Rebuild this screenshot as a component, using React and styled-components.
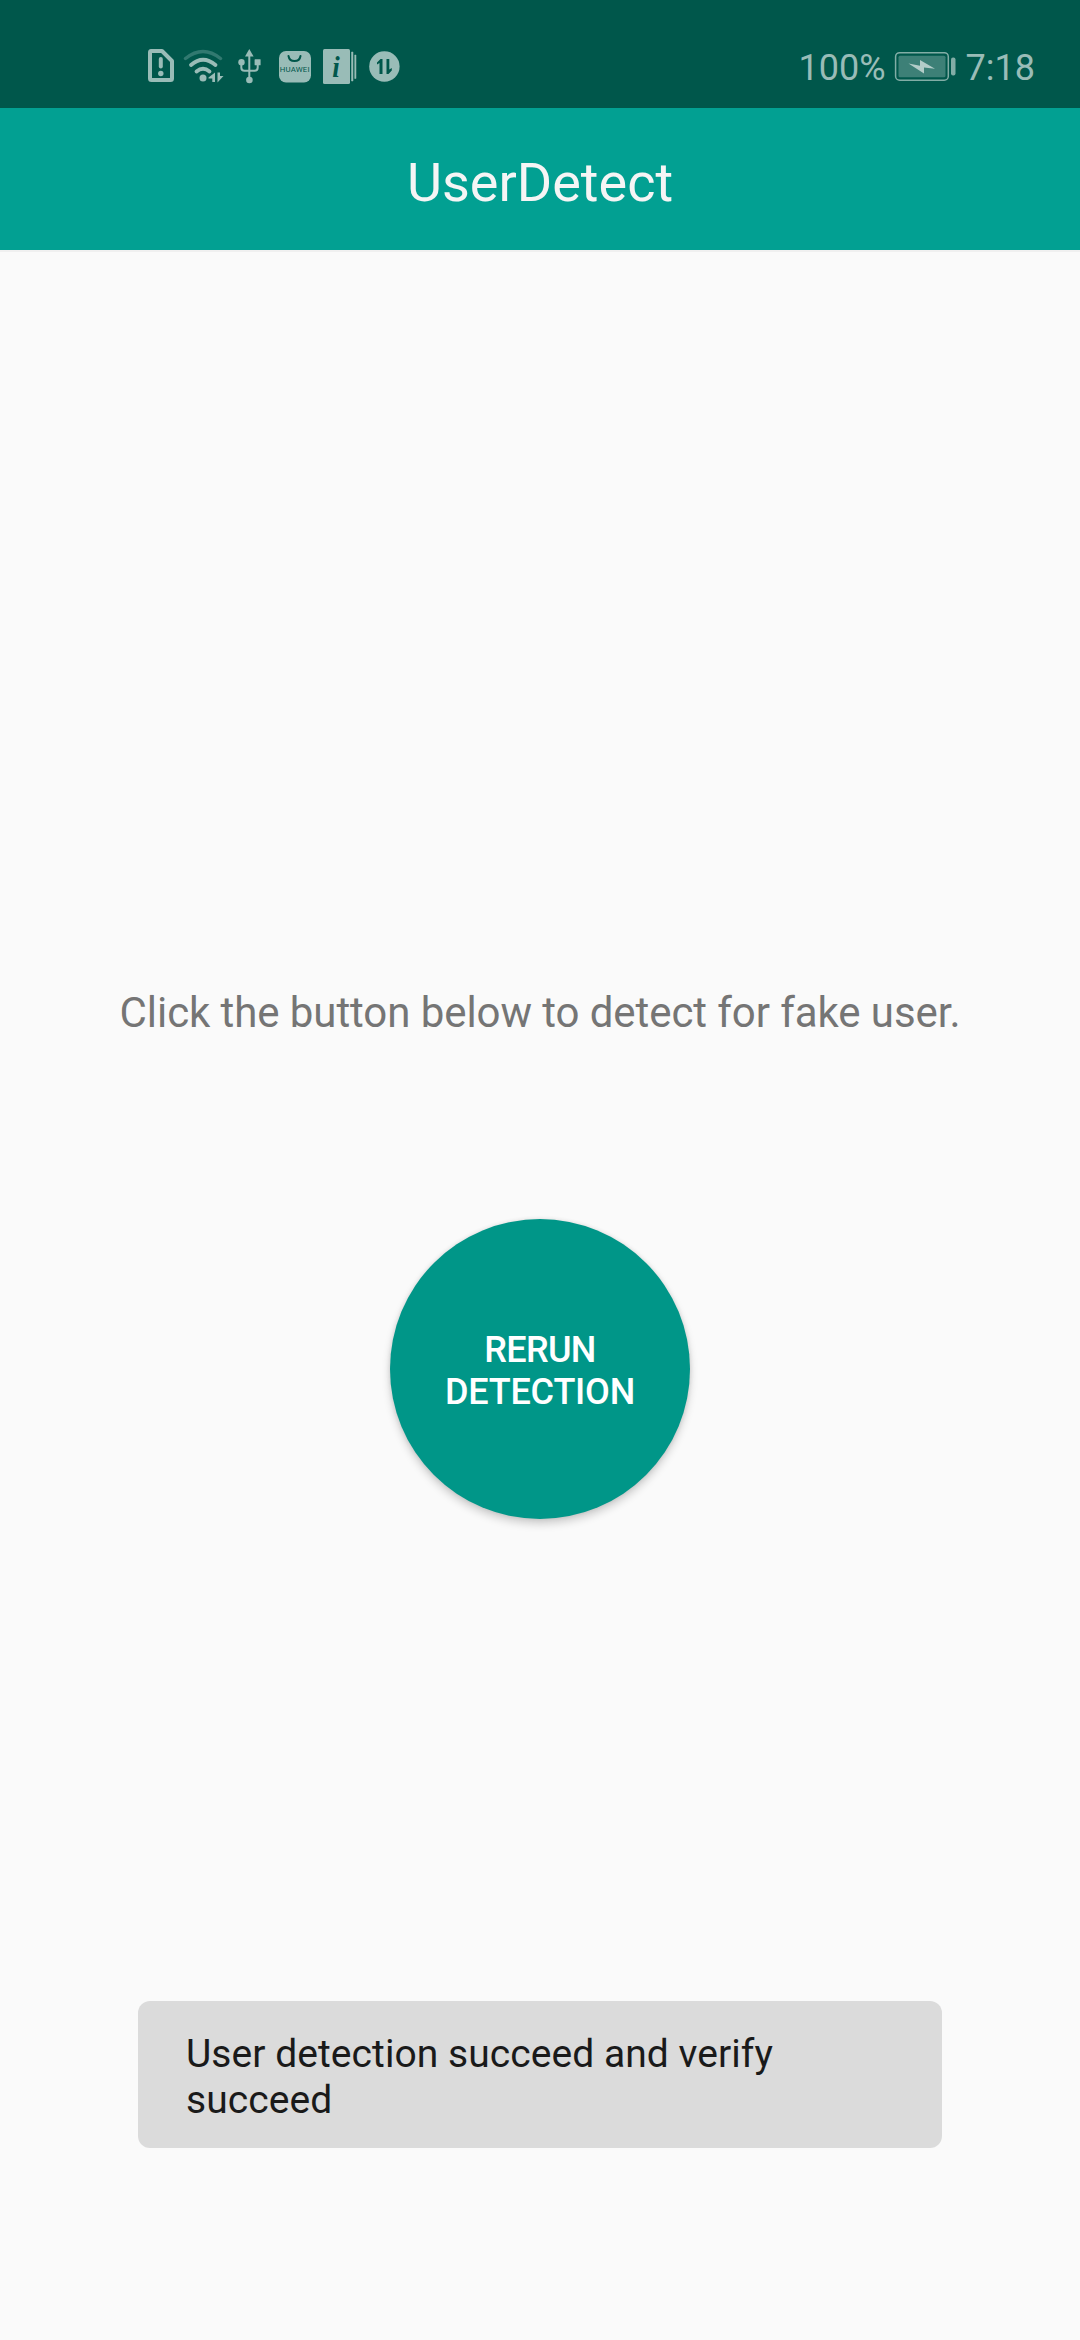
import React from 'react';
import styled, { createGlobalStyle } from 'styled-components';

const GlobalStyle = createGlobalStyle`
  * { box-sizing: border-box; }
  body { margin: 0; background: #fafafa; }
`;

const Screen = styled.div`
  width: 1080px;
  height: 2340px;
  display: flex;
  flex-direction: column;
  background: #fafafa;
  font-family: Roboto, 'Liberation Sans', sans-serif;
  overflow: hidden;
`;

const StatusBar = styled.header`
  height: 108px;
  flex: none;
  display: flex;
  justify-content: space-between;
  align-items: flex-start;
  padding: 45px 45px 0 144px;
  background: #00574b;
  color: #99bcb7;
`;

const StatusIcons = styled.div`
  display: flex;
  height: 42px;
`;

const StatusInfo = styled.div`
  display: flex;
  height: 42px;
  align-items: flex-start;
  font-size: 36px;
  line-height: 46px;
  white-space: nowrap;
`;

const Battery = styled.svg`
  display: block;
  flex: none;
  margin: 0 9px 0 7px;
`;

const AppBar = styled.div`
  height: 144px;
  flex: none;
  display: flex;
  align-items: center;
  justify-content: center;
  padding-top: 7px;
  background: #02a092;
  border-bottom: 2px solid #f0f0f0;
`;

const Title = styled.h1`
  margin: 0;
  font-size: 54px;
  line-height: 63px;
  font-weight: 400;
  color: #f5f5f5;
`;

const Content = styled.main`
  flex: 1;
  display: flex;
  flex-direction: column;
  align-items: center;
  padding-top: 736px;
`;

const Prompt = styled.p`
  margin: 0;
  font-size: 42px;
  line-height: 50px;
  letter-spacing: -0.075px;
  color: #757575;
  white-space: nowrap;
`;

const DetectButton = styled.button`
  width: 300px;
  height: 300px;
  flex: none;
  display: flex;
  flex-direction: column;
  align-items: center;
  justify-content: center;
  margin: 181px 0 0;
  padding: 4px 40px 0;
  border: 0;
  border-radius: 50%;
  background: #009688;
  box-shadow: 0 5px 8px rgba(0, 0, 0, 0.18), 0 0 4px rgba(0, 0, 0, 0.1);
  color: #fff;
  font-family: inherit;
  font-size: 36px;
  line-height: 42px;
  font-weight: 500;
  text-transform: uppercase;
`;

const ButtonLine = styled.span`
  letter-spacing: ${(p) => p.$tracking}px;
`;

const Toast = styled.div`
  width: 804px;
  height: 147px;
  flex: none;
  margin-top: 482px;
  padding: 30px 48px;
  border-radius: 12px;
  background: #dbdbdb;
  color: #1a1a1a;
  font-size: 39px;
  line-height: 46px;
  letter-spacing: 0.055px;
`;

function StatusGlyphs() {
  return (
    <svg width="260" height="42" viewBox="144 45 260 42" fill="none" stroke="#99bcb7">
      <path d="M151 51H162L172 61V78.500Q172 80 170.500 80H151.500Q150 80 150 78.500V52.500Q150 51 151 51Z" strokeWidth="4" strokeLinejoin="round" />
      <path d="M160.800 59V66.500" strokeWidth="4" strokeLinecap="round" />
      <circle cx="160.800" cy="73.500" r="2.700" fill="#99bcb7" stroke="none" />
      <path d="M185.500 58.500Q203 44.500 220.500 58.500" stroke="#317970" strokeWidth="3.500" strokeLinecap="round" />
      <path d="M191 65Q203 54.500 215.500 65M196.500 71.500Q203 66 209.500 71.500" strokeWidth="3.800" strokeLinecap="round" />
      <circle cx="203" cy="78" r="3.500" fill="#99bcb7" stroke="none" />
      <path d="M208.500 77.500L215 72.500V82H212.300V78.500H208.500ZM217.500 72.500H220V76H223.500L217.500 82.500Z" fill="#99bcb7" stroke="none" />
      <path d="M249.300 54V79M241.300 63V67.500Q241.300 70.800 244.500 70.800H254.500Q257.700 70.800 257.700 67.500V63" strokeWidth="2" />
      <path d="M249.300 49L253.600 56.500H245Z" fill="#99bcb7" stroke="none" />
      <circle cx="241.500" cy="62.300" r="3.200" fill="#99bcb7" stroke="none" />
      <rect x="254.600" y="59.300" width="6" height="6" rx="0.500" fill="#99bcb7" stroke="none" />
      <circle cx="249.400" cy="80" r="3.300" fill="#99bcb7" stroke="none" />
      <rect x="279" y="51" width="32" height="31.500" rx="7" fill="#99bcb7" stroke="none" />
      <path d="M288.500 56C289.500 62.700 299.500 62.700 300.500 56" stroke="#00574b" strokeWidth="2" strokeLinecap="round" />
      <text x="279.800" y="71.900" textLength="29.800" fontFamily="Roboto, sans-serif" fontSize="7.800" fontWeight="400" fill="#00574b" stroke="none">HUAWEI</text>
      <rect x="323" y="49" width="27" height="35" rx="1.500" fill="#99bcb7" stroke="none" />
      <path d="M351.500 52H353V81H351.500ZM354.700 55H356V78.500H354.700Z" fill="#99bcb7" stroke="#99bcb7" strokeWidth="0.500" />
      <text x="332.300" y="76.500" fontFamily="'Liberation Serif', serif" fontSize="30" fontStyle="italic" fontWeight="700" textLength="7.500" lengthAdjust="spacingAndGlyphs" fill="#00574b" stroke="none">i</text>
      <circle cx="384.400" cy="66.500" r="15.200" fill="#99bcb7" stroke="none" />
      <path d="M377 62.500L380.500 59H382.500V74H379.500V63L377 64.500ZM386.500 59H389.300V69.500L391.800 68V70.500L388.500 74H386.500Z" fill="#00574b" stroke="none" />
    </svg>
  );
}

export default function App() {
  return (
    <>
      <GlobalStyle />
      <Screen>
        <StatusBar>
          <StatusIcons>
            <StatusGlyphs />
          </StatusIcons>
          <StatusInfo>
            <span>100%</span>
            <Battery width="64" height="42" viewBox="893 45 64 42">
              <rect x="895.600" y="52.700" width="52.700" height="27.500" rx="4" fill="none" stroke="#82ada6" strokeWidth="1.500" />
              <rect x="898.500" y="55.700" width="47" height="21.500" rx="1.500" fill="#3d8077" />
              <path d="M908.500 63.500L920 65.800V60L935 68.800L924 67.500V73.500Z" fill="#b3cdc9" />
              <rect x="951" y="57.500" width="4.500" height="18" rx="2" fill="#82ada6" />
            </Battery>
            <span>7:18</span>
          </StatusInfo>
        </StatusBar>
        <AppBar>
          <Title>UserDetect</Title>
        </AppBar>
        <Content>
          <Prompt>Click the button below to detect for fake user.</Prompt>
          <DetectButton>
            <ButtonLine $tracking={-0.7}>Rerun</ButtonLine>
            <ButtonLine $tracking={-0.2}>Detection</ButtonLine>
          </DetectButton>
          <Toast role="status">User detection succeed and verify succeed</Toast>
        </Content>
      </Screen>
    </>
  );
}
